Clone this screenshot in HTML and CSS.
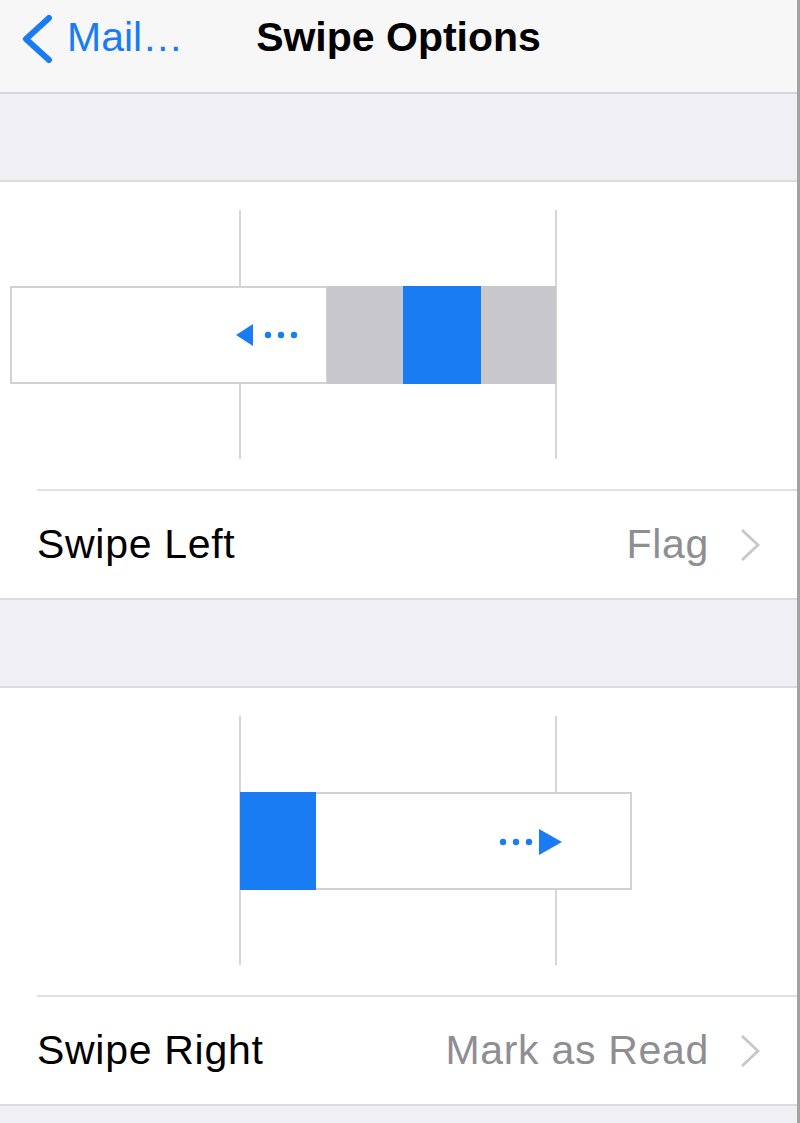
FILE: index.html
```html
<!DOCTYPE html>
<html>
<head>
    <link rel="stylesheet" href="styles.css">
</head>
<body>
    <div class="screen">
        <!-- Navigation bar -->
        <div class="navbar">
            <div class="nav-back">
                <svg class="back-chevron" width="34" height="50" viewBox="0 0 34 50">
                    <polyline points="29,4 6,25 29,46" fill="none" stroke="#1a7cf3" stroke-width="6" stroke-linecap="round" stroke-linejoin="round"/>
                </svg>
                <span class="back-label">Mail…</span>
            </div>
            <div class="nav-title">Swipe Options</div>
            <div></div>
        </div>

        <div class="group-gap"></div>

        <!-- Swipe left -->
        <div class="group">
            <svg class="diagram" width="800" height="307" viewBox="0 0 800 307">
                <line x1="240" y1="28" x2="240" y2="277" class="guide"/>
                <line x1="556" y1="28" x2="556" y2="277" class="guide"/>
                <rect x="11" y="105" width="316" height="96" class="cell-outline"/>
                <rect x="327" y="104" width="229" height="98" fill="#c7c7cc"/>
                <rect x="403" y="104" width="78" height="98" fill="#1a7cf3"/>
                <polygon points="236,153 253,142 253,164" fill="#1a7cf3"/>
                <circle cx="268" cy="153" r="3.2" fill="#1a7cf3"/>
                <circle cx="281" cy="153" r="3.2" fill="#1a7cf3"/>
                <circle cx="294" cy="153" r="3.2" fill="#1a7cf3"/>
            </svg>
            <div class="row">
                <span class="row-label">Swipe Left</span>
                <span class="row-value">Flag</span>
                <svg class="disclosure" width="22" height="34" viewBox="0 0 22 34">
                    <polyline points="3,2 19,17 3,32" fill="none" stroke="#c7c7cc" stroke-width="2.8"/>
                </svg>
            </div>
        </div>

        <div class="group-gap"></div>

        <!-- Swipe right -->
        <div class="group">
            <svg class="diagram" width="800" height="307" viewBox="0 0 800 307">
                <line x1="240" y1="28" x2="240" y2="277" class="guide"/>
                <line x1="556" y1="28" x2="556" y2="277" class="guide"/>
                <rect x="241" y="105" width="390" height="96" class="cell-outline"/>
                <rect x="240" y="104" width="76" height="98" fill="#1a7cf3"/>
                <circle cx="503" cy="154" r="3.2" fill="#1a7cf3"/>
                <circle cx="516" cy="154" r="3.2" fill="#1a7cf3"/>
                <circle cx="529" cy="154" r="3.2" fill="#1a7cf3"/>
                <polygon points="539,141 562,154 539,167" fill="#1a7cf3"/>
            </svg>
            <div class="row">
                <span class="row-label">Swipe Right</span>
                <span class="row-value">Mark as Read</span>
                <svg class="disclosure" width="22" height="34" viewBox="0 0 22 34">
                    <polyline points="3,2 19,17 3,32" fill="none" stroke="#c7c7cc" stroke-width="2.8"/>
                </svg>
            </div>
        </div>

        <div class="group-gap tail"></div>
    </div>
</body>
</html>
```

FILE: styles.css
```css
body {
    margin: 0;
    font-family: "Liberation Sans", Arial, sans-serif;
    background-color: #efeff4;
}

.screen {
    width: 797px;
    height: 1123px;
    border-right: 3px solid #a3a3a3;
    background-color: #efeff4;
    overflow: hidden;
}

/* Top bar */
.navbar {
    height: 75px;
    padding-bottom: 17px;
    display: grid;
    grid-template-columns: 1fr auto 1fr;
    align-items: center;
    background-color: #f7f7f7;
    border-bottom: 2px solid #d6d6d8;
}
.nav-back {
    display: flex;
    align-items: center;
    gap: 13px;
    padding-left: 20px;
    color: #1a7cf3;
    font-size: 41px;
}
.back-chevron {
    display: block;
    margin-top: 2px;
}
.nav-title {
    font-size: 41px;
    font-weight: bold;
    color: #000;
}

/* Grey spacers between groups */
.group-gap {
    height: 86px;
    background-color: #efeff4;
    border-bottom: 2px solid #dcdce0;
}
.group-gap.tail {
    border-bottom: none;
}

.group {
    background-color: #fff;
    border-bottom: 2px solid #dcdce0;
}

.diagram {
    display: block;
}
.guide {
    stroke: #d6d6d6;
    stroke-width: 2;
}
.cell-outline {
    fill: #fff;
    stroke: #d2d2d2;
    stroke-width: 2;
}

/* Settings row */
.row {
    margin-left: 37px;
    height: 107px;
    display: flex;
    align-items: center;
    padding-right: 36px;
    border-top: 2px solid #e0e0e2;
    font-size: 41px;
    letter-spacing: 0.7px;
}
.row-label {
    color: #000;
    flex: 1;
}
.row-value {
    color: #8e8e93;
    margin-right: 30px;
}
.disclosure {
    display: block;
}
```
